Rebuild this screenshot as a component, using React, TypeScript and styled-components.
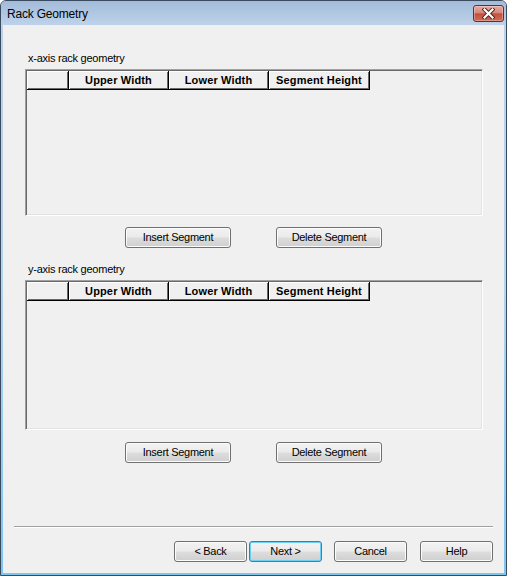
import React from 'react';
import styled, { createGlobalStyle } from 'styled-components';

const GlobalStyle = createGlobalStyle`
  html, body {
    margin: 0;
    padding: 0;
    background: #ffffff;
  }
  * {
    box-sizing: border-box;
  }
`;

const columns = [
  { label: '', width: 42 },
  { label: 'Upper Width', width: 100 },
  { label: 'Lower Width', width: 100 },
  { label: 'Segment Height', width: 101 },
];

const Window = styled.div`
  width: 507px;
  height: 576px;
  display: flex;
  flex-direction: column;
  border: 1px solid #3a4b60;
  border-radius: 6px 6px 0 0;
  overflow: hidden;
  background: linear-gradient(180deg, #bdd2ea 0%, #b4d3ee 50%, #7cc6ee 100%);
  font-family: 'Liberation Sans', Arial, sans-serif;
  color: #000;
`;

const TitleBar = styled.div`
  height: 24px;
  flex: none;
  display: flex;
  align-items: center;
  justify-content: space-between;
  padding: 0 2px 0 6px;
  background: linear-gradient(180deg, #a2bbd9 0%, #b0c7e2 50%, #bed3ea 100%);
`;

const Title = styled.span`
  font-size: 12px;
  line-height: 14px;
  letter-spacing: -0.2px;
  color: #000;
  padding-top: 1px;
`;

const CloseButton = styled.div`
  width: 31px;
  height: 17px;
  display: flex;
  align-items: center;
  justify-content: center;
  border: 1px solid #6b2c24;
  border-radius: 3px;
  background: linear-gradient(180deg, #e6aa9f 0%, #d8887c 45%, #c4503f 52%, #cf6b57 100%);
  box-shadow: inset 0 0 0 1px rgba(255, 255, 255, 0.3);
`;

const Frame = styled.div`
  flex: 1;
  display: flex;
  padding: 0 2px 2px 2px;
`;

const Client = styled.div`
  flex: 1;
  display: flex;
  flex-direction: column;
  background: #f0f0f0;
  padding: 27px 0 11px;
`;

const GroupLabel = styled.div`
  font-size: 11px;
  line-height: 13px;
  letter-spacing: -0.25px;
  padding-left: 25px;
  margin-bottom: 4px;
`;

const GridBox = styled.div<{ $height: number }>`
  height: ${p => p.$height}px;
  margin: 0 21px 0 22px;
  border-top: 1px solid #a0a0a0;
  border-left: 1px solid #a0a0a0;
  border-right: 1px solid #ffffff;
  border-bottom: 1px solid #ffffff;
  box-shadow: inset 1px 1px 0 #696969, inset -1px -1px 0 #e3e3e3;
  padding: 1px;
  background: #f0f0f0;
`;

const HeaderRow = styled.div`
  display: flex;
`;

const HeaderCell = styled.div<{ $width: number }>`
  width: ${p => p.$width}px;
  height: 19px;
  display: flex;
  align-items: center;
  justify-content: center;
  border-right: 1px solid #000;
  border-bottom: 1px solid #000;
  box-shadow: inset 1px 1px 0 #ffffff, inset -1px -1px 0 #696969;
  font-size: 11px;
  font-weight: bold;
  line-height: 13px;
  letter-spacing: 0.15px;
  white-space: nowrap;
`;

const ButtonRow = styled.div<{ $top: number; $bottom: number }>`
  display: flex;
  justify-content: center;
  gap: 45px;
  margin-top: ${p => p.$top}px;
  margin-bottom: ${p => p.$bottom}px;
`;

const Button = styled.div<{ $width: number; $default?: boolean; $space?: number }>`
  width: ${p => p.$width}px;
  height: 21px;
  margin-left: ${p => p.$space || 0}px;
  display: flex;
  align-items: center;
  justify-content: center;
  border: 1px solid ${p => (p.$default ? '#3c7fb1' : '#707070')};
  border-radius: 3px;
  background: linear-gradient(180deg, #f2f2f2 0%, #ebebeb 48%, #dddddd 52%, #cfcfcf 100%);
  box-shadow: inset 0 0 0 1px ${p => (p.$default ? '#6cd0f5' : '#fcfcfc')};
  font-size: 11px;
  line-height: 13px;
  letter-spacing: -0.3px;
  white-space: nowrap;
`;

const Spacer = styled.div`
  flex: 1;
`;

const Separator = styled.div`
  height: 2px;
  margin: 0 11px;
  border-top: 1px solid #a0a0a0;
  border-bottom: 1px solid #ffffff;
`;

const Footer = styled.div`
  display: flex;
  justify-content: flex-end;
  padding-right: 11px;
  margin-top: 13px;
`;

const CloseIcon = () => (
  <svg width="13" height="11" viewBox="0 0 13 11">
    <path d="M2.5 1.5 L10.5 9.5 M10.5 1.5 L2.5 9.5" stroke="#4a1f1a" strokeWidth="4" strokeLinecap="square" />
    <path d="M2.5 1.5 L10.5 9.5 M10.5 1.5 L2.5 9.5" stroke="#ffffff" strokeWidth="2.2" strokeLinecap="square" />
  </svg>
);

const Grid = ({ height }: { height: number }) => (
  <GridBox $height={height}>
    <HeaderRow>
      {columns.map((c, i) => (
        <HeaderCell key={i} $width={c.width}>
          {c.label}
        </HeaderCell>
      ))}
    </HeaderRow>
  </GridBox>
);

const App = () => {
  return (
    <>
      <GlobalStyle />
      <Window>
        <TitleBar>
          <Title>Rack Geometry</Title>
          <CloseButton>
            <CloseIcon />
          </CloseButton>
        </TitleBar>
        <Frame>
          <Client>
            <GroupLabel>x-axis rack geometry</GroupLabel>
            <Grid height={147} />
            <ButtonRow $top={11} $bottom={15}>
              <Button $width={106}>Insert Segment</Button>
              <Button $width={106}>Delete Segment</Button>
            </ButtonRow>

            <GroupLabel>y-axis rack geometry</GroupLabel>
            <Grid height={150} />
            <ButtonRow $top={12} $bottom={0}>
              <Button $width={106}>Insert Segment</Button>
              <Button $width={106}>Delete Segment</Button>
            </ButtonRow>

            <Spacer />
            <Separator />
            <Footer>
              <Button $width={73}>&lt; Back</Button>
              <Button $width={73} $default $space={2}>Next &gt;</Button>
              <Button $width={73} $space={12}>Cancel</Button>
              <Button $width={73} $space={13}>Help</Button>
            </Footer>
          </Client>
        </Frame>
      </Window>
    </>
  );
};

export default App;
